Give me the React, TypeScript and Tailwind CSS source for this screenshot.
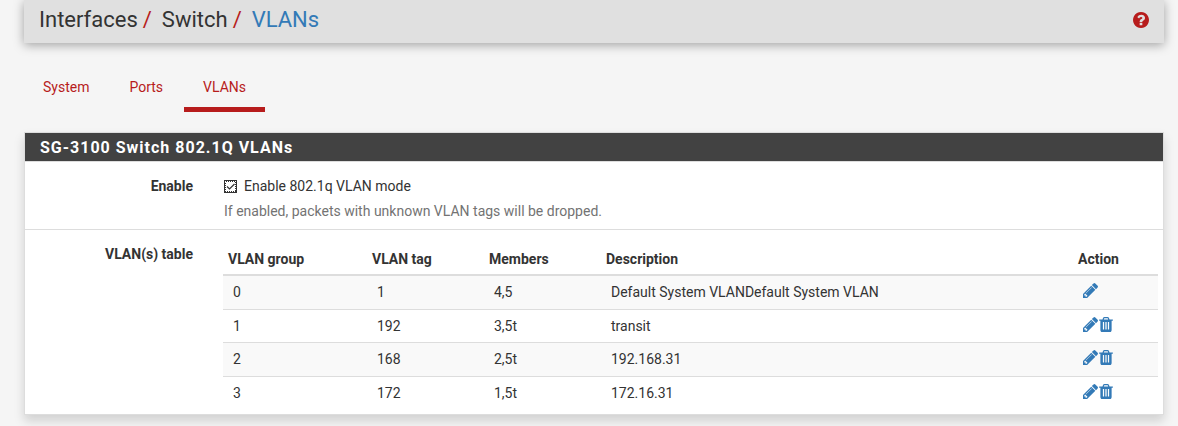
import React, { useState } from 'react';

interface Vlan {
  group: number;
  tag: number;
  members: string;
  description: string;
}

const vlans: Vlan[] = [
  { group: 0, tag: 1, members: '4,5', description: 'Default System VLANDefault System VLAN' },
  { group: 1, tag: 192, members: '3,5t', description: 'transit' },
  { group: 2, tag: 168, members: '2,5t', description: '192.168.31' },
  { group: 3, tag: 172, members: '1,5t', description: '172.16.31' },
];

const tabs = ['System', 'Ports', 'VLANs'];

const PencilIcon = () => (
  <svg viewBox="128 149 1515 1515" className="block size-[15px]" fill="currentColor" aria-hidden="true">
    <path d="M491 1536l91-91-235-235-91 91v107h128v128h107zm523-928q0-22-22-22-10 0-17 7l-542 542q-7 7-7 17 0 22 22 22 10 0 17-7l542-542q7-7 7-17zm-54-192l416 416-832 832h-416v-416zm683 96q0 53-37 90l-166 166-416-416 166-165q36-38 90-38 53 0 91 38l235 234q37 39 37 91z" />
  </svg>
);

const TrashIcon = () => (
  <svg viewBox="192 128 1408 1536" className="block h-[15px] w-[14px]" fill="currentColor" aria-hidden="true">
    <path d="M704 1376v-704q0-14-9-23t-23-9h-64q-14 0-23 9t-9 23v704q0 14 9 23t23 9h64q14 0 23-9t9-23zm256 0v-704q0-14-9-23t-23-9h-64q-14 0-23 9t-9 23v704q0 14 9 23t23 9h64q14 0 23-9t9-23zm256 0v-704q0-14-9-23t-23-9h-64q-14 0-23 9t-9 23v704q0 14 9 23t23 9h64q14 0 23-9t9-23zm-544-992h448l-48-117q-7-9-17-11h-317q-10 2-17 11zm928 32v64q0 14-9 23t-23 9h-96v948q0 83-47 143.5t-113 60.5h-832q-66 0-113-58.5t-47-141.5v-952h-96q-14 0-23-9t-9-23v-64q0-14 9-23t23-9h309l70-167q15-37 54-63t79-26h320q40 0 79 26t54 63l70 167h309q14 0 23 9t9 23z" />
  </svg>
);

const HelpIcon = () => (
  <svg viewBox="128 128 1536 1536" className="block size-4" fill="currentColor" aria-hidden="true">
    <path d="M1024 1376v-192q0-14-9-23t-23-9h-192q-14 0-23 9t-9 23v192q0 14 9 23t23 9h192q14 0 23-9t9-23zm256-672q0-88-55.5-163t-138.5-116-170-41q-243 0-371 213-15 24 8 42l132 100q7 6 19 6 16 0 25-12 53-68 86-92 34-24 86-24 48 0 85.5 26t37.5 59q0 38-20 61t-68 45q-63 28-115.5 86.5t-52.5 125.5v36q0 14 9 23t23 9h192q14 0 23-9t9-23q0-19 21.5-49.5t54.5-49.5q32-18 49-28.5t46-35 44.5-48 28-60.5 12.5-81zm384 192q0 209-103 385.5t-279.5 279.5-385.5 103-385.5-103-279.5-279.5-103-385.5 103-385.5 279.5-279.5 385.5-103 385.5 103 279.5 279.5 103 385.5z" />
  </svg>
);

const Header = () => (
  <header className="flex h-[43px] items-center justify-between bg-[#e0e0e0] px-[15px] pb-1 shadow-[0_2px_10px_rgba(0,0,0,0.35)]">
    <h1 className="flex text-[22px] leading-6">
      <span>Interfaces</span>
      <span className="mr-[10px] ml-[5px] text-[#b71c1c]">/</span>
      <span>Switch</span>
      <span className="mr-[10px] ml-[5px] text-[#b71c1c]">/</span>
      <a href="#vlans" className="text-[#337ab7]">VLANs</a>
    </h1>
    <a href="#help" aria-label="Help" className="text-[#b71c1c]">
      <HelpIcon />
    </a>
  </header>
);

const VlanTable = () => (
  <table className="w-full table-fixed border-collapse text-left">
    <colgroup>
      <col className="w-[144px]" />
      <col className="w-[117px]" />
      <col className="w-[117px]" />
      <col />
      <col className="w-[85px]" />
    </colgroup>
    <thead>
      <tr className="h-[31px] border-b-2 border-[#ddd]">
        <th className="px-[5px] font-bold">VLAN group</th>
        <th className="px-[5px] font-bold">VLAN tag</th>
        <th className="px-[5px] font-bold">Members</th>
        <th className="px-[5px] font-bold">Description</th>
        <th className="px-[5px] font-bold">Action</th>
      </tr>
    </thead>
    <tbody>
      {vlans.map((vlan) => (
        <tr key={vlan.group} className="border-b border-[#ddd] last:border-b-0 odd:h-[34px] odd:bg-[#f9f9f9] even:h-[33px]">
          <td className="px-[10px]">{vlan.group}</td>
          <td className="px-[10px]">{vlan.tag}</td>
          <td className="px-[10px]">{vlan.members}</td>
          <td className="px-[10px]">{vlan.description}</td>
          <td className="px-[10px]">
            <div className="flex gap-px pb-[3px] text-[#337ab7]">
              <a href={`#edit-${vlan.group}`} aria-label={`Edit VLAN group ${vlan.group}`}>
                <PencilIcon />
              </a>
              {vlan.group > 0 && (
                <a href={`#delete-${vlan.group}`} aria-label={`Delete VLAN group ${vlan.group}`}>
                  <TrashIcon />
                </a>
              )}
            </div>
          </td>
        </tr>
      ))}
    </tbody>
  </table>
);

export default function App() {
  const [enabled, setEnabled] = useState(true);

  return (
    <div className="min-h-screen bg-[#f5f5f5] pr-[14px] pb-3 pl-6 font-[Roboto,sans-serif] text-[14px] leading-5 text-[#333]">
      <Header />

      <nav className="mt-[34px] flex h-[35px] gap-[2px]">
        {tabs.map((tab) => (
          <a
            key={tab}
            href={`#${tab.toLowerCase()}`}
            className={`border-b-[5px] px-[19px] text-[#b71c1c] ${tab === 'VLANs' ? 'border-[#b71c1c]' : 'border-transparent'}`}
          >
            {tab}
          </a>
        ))}
      </nav>

      <section className="mt-5 border border-[#ddd] bg-white shadow-[0_6px_10px_rgba(0,0,0,0.15)]">
        <h2 className="border-b border-[#ddd] bg-[#424242] px-[15px] pt-[5px] pb-[3px] text-[16px] leading-5 font-bold tracking-[1px] text-white">
          SG-3100 Switch 802.1Q VLANs
        </h2>

        <div className="flex border-b border-[#ddd] pt-[14px] pb-2">
          <span className="w-[168px] shrink-0 text-right font-bold">Enable</span>
          <div className="ml-[31px]">
            <label className="flex items-center gap-[7px]">
              <span className="relative size-[13px]">
                <input
                  type="checkbox"
                  checked={enabled}
                  onChange={(e) => setEnabled(e.target.checked)}
                  className="block size-[13px] appearance-none border border-[#333] bg-white"
                />
                <svg viewBox="0 0 13 13" className="pointer-events-none absolute inset-0 size-[13px]" fill="none" stroke="#333" aria-hidden="true">
                  <rect x="1.5" y="1.5" width="10" height="10" strokeDasharray="1 1" shapeRendering="crispEdges" />
                  {enabled && <path d="M3 6.5l2.5 2.5 5-5" strokeWidth="1.2" />}
                </svg>
              </span>
              Enable 802.1q VLAN mode
            </label>
            <p className="mt-[5px] text-[#737373]">If enabled, packets with unknown VLAN tags will be dropped.</p>
          </div>
        </div>

        <div className="flex pt-[14px] pr-[5px] pb-[5px]">
          <span className="w-[168px] shrink-0 text-right font-bold">VLAN(s) table</span>
          <div className="ml-[30px] grow">
            <VlanTable />
          </div>
        </div>
      </section>
    </div>
  );
}
